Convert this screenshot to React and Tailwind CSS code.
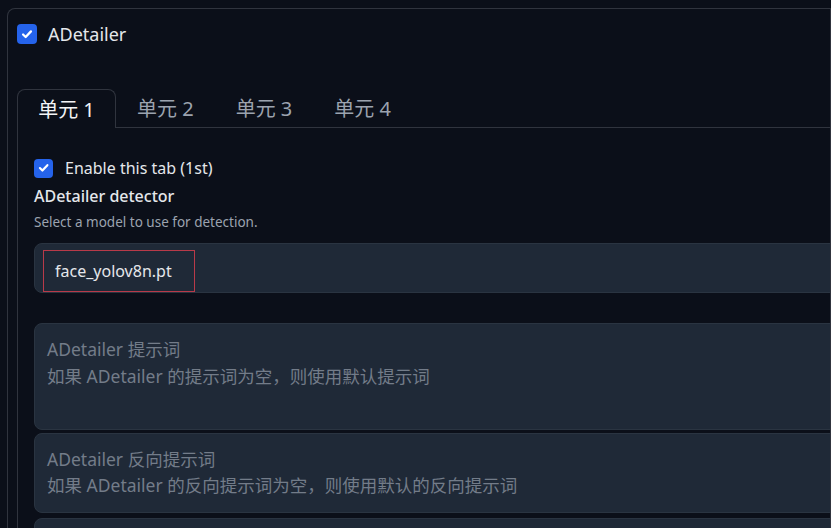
import React from "react";

const font = { fontFamily: '"Source Sans Pro", "Noto Sans", "Noto Sans CJK SC", sans-serif' };

function Check({ size = "w-5 h-5" }) {
  return (
    <span className={`${size} shrink-0 rounded-[4px] bg-[#2563eb] flex items-center justify-center`}>
      <svg viewBox="0 0 16 16" className="w-[70%] h-[70%]" fill="none" stroke="white" strokeWidth="2.6" strokeLinecap="round" strokeLinejoin="round">
        <path d="M3.5 8.5l3 3 6-6.5" />
      </svg>
    </span>
  );
}

export default function App() {
  return (
    <div className="w-[831px] h-[528px] bg-[#0b0f19] overflow-hidden pt-2 pl-[7px]" style={font}>
      <div className="h-[600px] border-t border-l border-r border-[#30343e] rounded-tl-[8px] overflow-hidden pl-[9px] pt-[15px]">
        <div className="flex items-center gap-[11px] h-5">
          <Check />
          <span className="text-[18px] text-[#e5e7eb] leading-none">ADetailer</span>
        </div>
        <div className="mt-[45px] w-[1000px]">
          <div className="flex items-end h-[39px]">
            <div className="h-[39px] w-[99px] border border-b-0 border-[#30343e] rounded-t-[8px] flex items-center justify-center pt-[1px] text-[20px] text-[#f3f4f6] bg-[#0b0f19]">
              单元 1
            </div>
            <div className="flex-1 h-[39px] border-b border-[#30343e] flex items-center pt-[1px] text-[20px] text-[#9ca3af]">
              <span className="ml-[21px]">单元 2</span>
              <span className="ml-[42px]">单元 3</span>
              <span className="ml-[42px]">单元 4</span>
            </div>
          </div>
          <div className="border-l border-[#30343e] pl-4 pt-[30px] h-[500px]">
            <div className="flex items-center gap-3 h-5">
              <Check size="w-[19px] h-[19px]" />
              <span className="text-[16px] text-[#e5e7eb]">Enable this tab (1st)</span>
            </div>
            <div className="mt-[6px] text-[16px] font-medium text-[#e5e7eb] leading-[24px]">ADetailer detector</div>
            <div className="text-[13.5px] text-[#9ca3af] leading-[26px] pt-[1px]">Select a model to use for detection.</div>
            <div className="mt-[8px] h-[50px] bg-[#1f2937] rounded-[8px] border border-[#2a3441] flex items-start pl-[8px] pt-[6px]">
              <div className="h-[42px] w-[152px] border border-[#b93a49] flex items-center pl-[11px] text-[16px] text-[#e5e7eb]">
                face_yolov8n.pt
              </div>
            </div>
            <div className="mt-[30px] h-[107px] bg-[#1f2937] rounded-[8px] border border-[#2a3441] pl-[12px] pt-[12px] text-[17.5px] leading-[27px] text-[#737c89]">
              <div>ADetailer 提示词</div>
              <div>如果 ADetailer 的提示词为空，则使用默认提示词</div>
            </div>
            <div className="mt-[3px] h-[80px] bg-[#1f2937] rounded-[8px] border border-[#2a3441] pl-[12px] pt-[12px] text-[17.5px] leading-[26px] text-[#737c89]">
              <div>ADetailer 反向提示词</div>
              <div>如果 ADetailer 的反向提示词为空，则使用默认的反向提示词</div>
            </div>
            <div className="mt-[5px] h-[80px] bg-[#1f2937] rounded-[8px] border border-[#2a3441]"></div>
          </div>
        </div>
      </div>
    </div>
  );
}
